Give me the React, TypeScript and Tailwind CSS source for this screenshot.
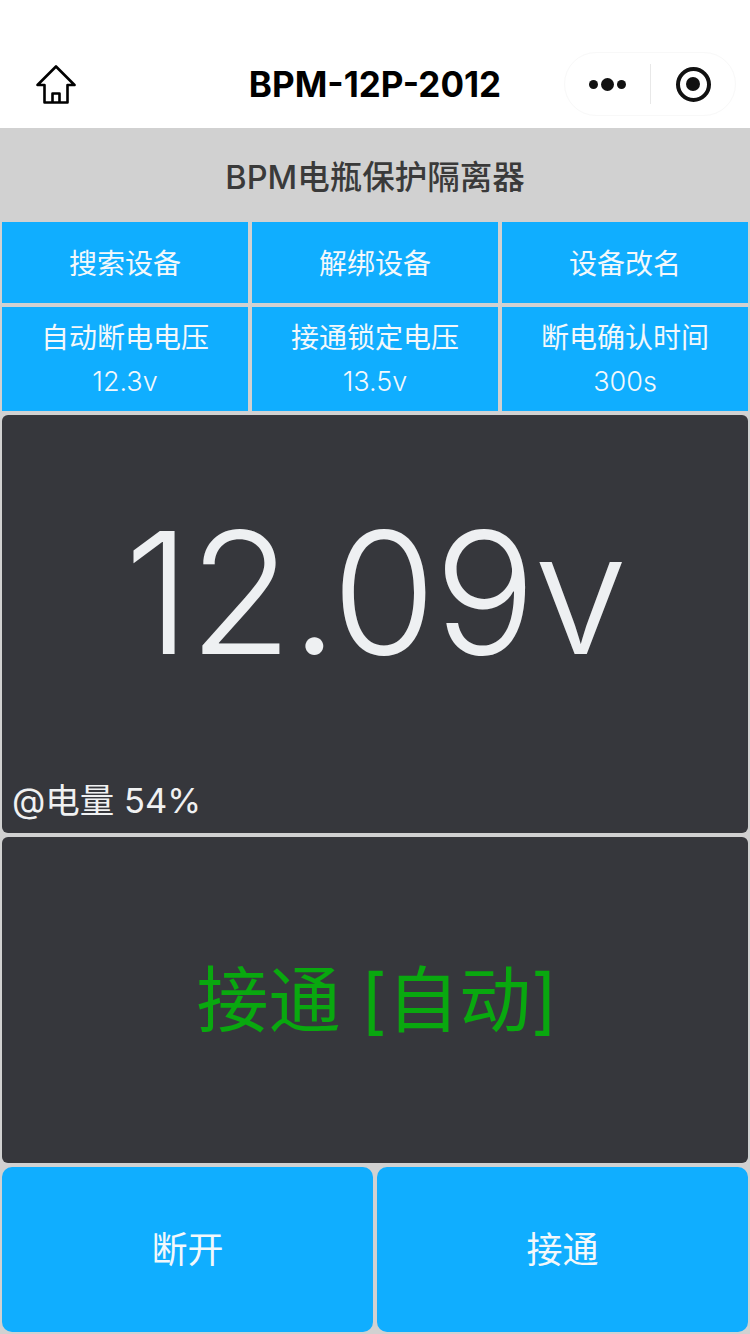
import React from 'react';

const sans = "font-['Inter','Noto_Sans_CJK_SC',sans-serif]";

const HomeIcon = () => (
    <svg width="40" height="40" viewBox="0 0 40 40" fill="none" stroke="#000" strokeWidth="2.6" strokeLinejoin="round">
        <path d="M20 1.5 L38.5 20 H31.5 V37.5 H8.5 V20 H1.5 Z" />
        <path d="M16.5 37.5 V28.5 H23.5 V37.5" />
    </svg>
);

const Cell = ({ label, value }: { label: string; value?: string }) => (
    <div className="flex-1 flex flex-col items-center justify-center bg-[#10aeff] text-[28px] leading-[44px] text-[#f3f8fb] pt-[2px]">
        <span>{label}</span>
        {value && <span className="text-[27px] leading-[44px] font-light">{value}</span>}
    </div>
);

export default function App() {
    return (
        <div className={`w-[750px] h-[1334px] flex flex-col bg-[#d1d1d1] ${sans}`}>
            {/* Nav bar */}
            <div className="relative h-[128px] shrink-0 bg-white">
                <div className="absolute left-[36px] top-[65px]"><HomeIcon /></div>
                <div className="absolute inset-x-0 top-[62px] text-center text-[35px] leading-[44px] font-bold text-black">BPM-12P-2012</div>
                <div className="absolute left-[564px] top-[52px] w-[172px] h-[64px] rounded-full border border-[#f8f8f8] flex items-center">
                    <div className="w-[85px] flex items-center justify-center gap-[3px]">
                        <span className="w-[9px] h-[9px] rounded-full bg-[#111]"></span>
                        <span className="w-[13px] h-[13px] rounded-full bg-[#111]"></span>
                        <span className="w-[9px] h-[9px] rounded-full bg-[#111]"></span>
                    </div>
                    <div className="w-px h-[40px] bg-[#e8e8e8]"></div>
                    <div className="flex-1 flex items-center justify-center">
                        <div className="w-[35px] h-[35px] rounded-full border-[4px] border-[#111] flex items-center justify-center">
                            <span className="w-[14px] h-[14px] rounded-full bg-[#111]"></span>
                        </div>
                    </div>
                </div>
            </div>

            {/* Title */}
            <div className="h-[94px] shrink-0 flex items-center justify-center text-[32.5px] font-medium text-[#3a3a3a] pt-[6px]">BPM电瓶保护隔离器</div>

            <div className="flex-1 flex flex-col gap-[4px] px-[2px] pb-[2px]">
                <div className="h-[81px] flex gap-[4px]">
                    <Cell label="搜索设备" />
                    <Cell label="解绑设备" />
                    <Cell label="设备改名" />
                </div>
                <div className="h-[104px] flex gap-[4px]">
                    <Cell label="自动断电电压" value="12.3v" />
                    <Cell label="接通锁定电压" value="13.5v" />
                    <Cell label="断电确认时间" value="300s" />
                </div>

                {/* Voltage */}
                <div className="relative h-[418px] rounded-[6px] bg-[#36373c] flex items-center justify-center">
                    <span className="text-[169px] leading-none font-[350] tracking-[-2px] text-[#eef0f2] -mt-[64px]">12.09v</span>
                    <span className="absolute left-[10px] bottom-[10px] text-[34.5px] leading-[44px] text-[#f0f1f2]">@电量 54%</span>
                </div>

                {/* Relay state */}
                <div className="h-[326px] rounded-[6px] bg-[#36373c] flex items-center justify-center pl-[4px]">
                    <span className="text-[72px] leading-none text-[#09a80f]">接通 [自动]</span>
                </div>

                <div className="flex-1 flex gap-[4px]">
                    <button className="flex-1 rounded-[10px] bg-[#10aeff] text-[36px] text-[#f3f8fb]">断开</button>
                    <button className="flex-1 rounded-[10px] bg-[#10aeff] text-[36px] text-[#f3f8fb]">接通</button>
                </div>
            </div>
        </div>
    );
}
